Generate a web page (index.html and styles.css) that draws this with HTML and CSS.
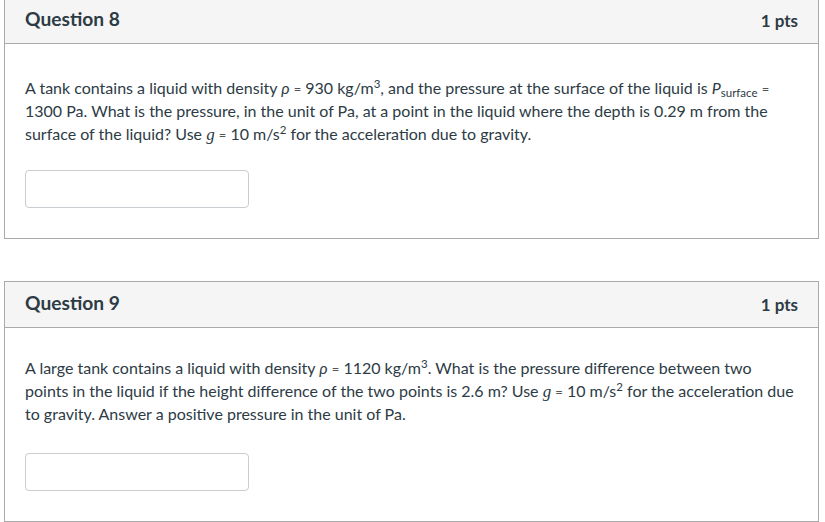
FILE: index.html
```html
<!DOCTYPE html>
<html>
<head>
<meta charset="utf-8">
<link rel="stylesheet" href="styles.css">
</head>
<body>
<div class="quiz">
  <div class="question q8">
    <div class="header">
      <span class="name">Question 8</span>
      <span class="points">1 pts</span>
    </div>
    <div class="content">
      <p class="text">A tank contains a liquid with density <span class="mi">ρ</span> <span class="mo">=</span> 930 kg/m<sup>3</sup>, and the pressure at the surface of the liquid is <span class="mi">P</span><sub>surface</sub> <span class="mo">=</span> 1300 Pa. What is the pressure, in the unit of Pa, at a point in the liquid where the depth is 0.29 m from the surface of the liquid? Use <span class="mg">g</span> <span class="mo">=</span> 10 m/s<sup>2</sup> for the acceleration due to gravity.</p>
      <div class="answer"><input class="field" type="text"></div>
    </div>
  </div>
  <div class="question q9">
    <div class="header">
      <span class="name">Question 9</span>
      <span class="points">1 pts</span>
    </div>
    <div class="content">
      <p class="text">A large tank contains a liquid with density <span class="mi">ρ</span> <span class="mo">=</span> 1120 kg/m<sup>3</sup>. What is the pressure difference between two points in the liquid if the height difference of the two points is 2.6 m? Use <span class="mg">g</span> <span class="mo">=</span> 10 m/s<sup>2</sup> for the acceleration due to gravity. Answer a positive pressure in the unit of Pa.</p>
      <div class="answer"><input class="field" type="text"></div>
    </div>
  </div>
</div>
</body>
</html>
```

FILE: styles.css
```css
html, body {
  background: #fff;
}
body {
  margin: -3px 6px 0 4px;
  font-family: Lato, "Noto Sans", sans-serif;
  color: #2d3b45;
}
.quiz {
  display: flex;
  flex-direction: column;
  gap: 42px;
}
.question {
  border: 1px solid #aaaaaa;
  background: #fff;
}
.header {
  height: 45px;
  background: #f5f5f5;
  border-bottom: 1px solid #aaaaaa;
  display: flex;
  align-items: center;
  justify-content: space-between;
  padding: 0 20px;
}
.name {
  font-size: 19.2px;
  font-weight: 700;
  color: #2d3b45;
  margin-top: -4px;
}
.points {
  font-size: 17px;
  font-weight: 700;
  color: #2d3b45;
}
.content {
  padding: 28px 20px 30px;
}
.q8 .content {
  padding-top: 32px;
}
.text {
  margin: 0;
  font-size: 16px;
  line-height: 23px;
}
.text sup, .text sub {
  font-size: 11.5px;
  line-height: 0;
}
.text sup {
  vertical-align: 6px;
}
.text sub {
  vertical-align: -3px;
}
.mi {
  font-style: italic;
  line-height: 0;
}
.mg {
  font-family: "Liberation Serif", serif;
  font-style: italic;
  font-size: 17px;
  line-height: 0;
}
.mo {
  font-size: 13px;
  color: #555;
  line-height: 0;
}
.answer {
  margin-top: 28px;
}
.q8 .answer {
  margin-top: 25px;
}
.field {
  display: block;
  box-sizing: border-box;
  width: 224px;
  height: 38px;
  margin: 0;
  border: 1px solid #c7cdd1;
  border-radius: 4px;
  background: #fff;
}
```
